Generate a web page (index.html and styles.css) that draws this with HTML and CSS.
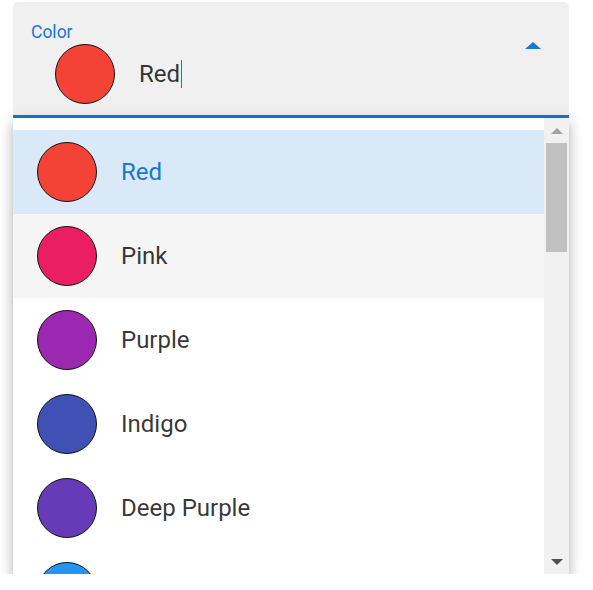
FILE: index.html
```html
<!DOCTYPE html>
<html>
<head>
<meta charset="utf-8">
<link rel="stylesheet" href="styles.css">
</head>
<body>
<div class="combo">
  <div class="field">
    <div class="field-main">
      <div class="label">Color</div>
      <div class="value-row">
        <span class="swatch swatch-red"></span>
        <span class="value">Red</span><span class="caret"></span>
      </div>
    </div>
    <span class="arrow-up"></span>
  </div>
  <div class="popup">
    <ul class="options">
      <li class="option selected"><span class="swatch swatch-red"></span><span class="opt-text">Red</span></li>
      <li class="option hover"><span class="swatch swatch-pink"></span><span class="opt-text">Pink</span></li>
      <li class="option"><span class="swatch swatch-purple"></span><span class="opt-text">Purple</span></li>
      <li class="option"><span class="swatch swatch-indigo"></span><span class="opt-text">Indigo</span></li>
      <li class="option"><span class="swatch swatch-deeppurple"></span><span class="opt-text">Deep Purple</span></li>
      <li class="option"><span class="swatch swatch-blue"></span><span class="opt-text">Blue</span></li>
    </ul>
    <div class="scrollbar">
      <div class="sb-btn"><span class="sb-up"></span></div>
      <div class="sb-track"><div class="sb-thumb"></div></div>
      <div class="sb-btn"><span class="sb-down"></span></div>
    </div>
  </div>
</div>
</body>
</html>
```
FILE: styles.css
```css
* { box-sizing: border-box; }
html, body { margin: 0; padding: 0; background: #fff; }
body {
  font-family: Roboto, "Liberation Sans", sans-serif;
  color: rgba(0,0,0,0.8);
}
.combo {
  width: 556px;
  margin: 2px 0 0 13px;
}
.field {
  display: flex;
  height: 116px;
  background: #f0f0f0;
  border-radius: 5px 5px 0 0;
  border-bottom: 3px solid #1976d2;
  padding: 21px 28px 0 18px;
}
.field-main { flex: 1; }
.label {
  font-size: 17.5px;
  line-height: 18px;
  color: #1976d2;
}
.value-row {
  display: flex;
  align-items: center;
  margin: 3px 0 0 24px;
}
.swatch {
  display: block;
  flex: none;
  width: 60px;
  height: 60px;
  border-radius: 50%;
  border: 1px solid #111;
}
.swatch-red { background: #f44336; }
.swatch-pink { background: #e91e63; }
.swatch-purple { background: #9c27b0; }
.swatch-indigo { background: #3f51b5; }
.swatch-deeppurple { background: #673ab7; }
.swatch-blue { background: #2196f3; }
.value {
  margin-left: 24px;
  font-size: 24px;
  line-height: 28px;
}
.caret {
  display: block;
  width: 1px;
  height: 28px;
  background: #1976d2;
  margin-left: 1px;
}
.arrow-up {
  display: block;
  width: 0;
  height: 0;
  margin-top: 19px;
  border-left: 8px solid transparent;
  border-right: 8px solid transparent;
  border-bottom: 7px solid #1976d2;
}
.popup {
  display: flex;
  height: 456px;
  background: #fff;
  overflow: hidden;
  box-shadow: 0 5px 5px -3px rgba(0,0,0,0.2), 0 8px 10px 1px rgba(0,0,0,0.14), 0 3px 14px 2px rgba(0,0,0,0.12);
}
.options {
  flex: 1;
  list-style: none;
  margin: 0;
  padding: 12px 0 0;
}
.option {
  display: flex;
  align-items: center;
  height: 84px;
  padding-left: 24px;
}
.option.selected { background: #dae9f8; color: #1976d2; }
.option.hover { background: #f5f5f5; }
.opt-text {
  margin-left: 24px;
  font-size: 24px;
  line-height: 28px;
}
.scrollbar {
  width: 25px;
  flex: none;
  display: flex;
  flex-direction: column;
  background: #f1f1f1;
}
.sb-btn {
  height: 25px;
  flex: none;
  display: flex;
  align-items: center;
  justify-content: center;
}
.sb-up {
  width: 0; height: 0;
  border-left: 6px solid transparent;
  border-right: 6px solid transparent;
  border-bottom: 6px solid #a3a3a3;
}
.sb-down {
  width: 0; height: 0;
  border-left: 6px solid transparent;
  border-right: 6px solid transparent;
  border-top: 6px solid #505050;
}
.sb-track { flex: 1; padding: 0 2px; }
.sb-thumb {
  height: 109px;
  background: #c1c1c1;
}
```
